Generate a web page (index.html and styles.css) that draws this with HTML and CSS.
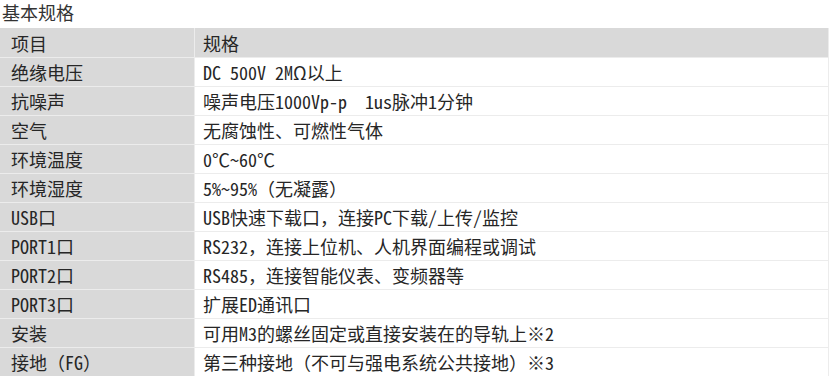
FILE: index.html
```html
<!DOCTYPE html>
<html lang="zh">
<head>
<meta charset="utf-8">
<link rel="stylesheet" href="styles.css">
</head>
<body>
<div class="title">基本规格</div>
<table class="spec">
  <thead>
    <tr><th class="c1">项目</th><th class="c2">规格</th></tr>
  </thead>
  <tbody>
    <tr><td class="c1">绝缘电压</td><td class="c2">DC 500V 2MΩ以上</td></tr>
    <tr><td class="c1">抗噪声</td><td class="c2">噪声电压1000Vp-p　1us脉冲1分钟</td></tr>
    <tr><td class="c1">空气</td><td class="c2">无腐蚀性、可燃性气体</td></tr>
    <tr><td class="c1">环境温度</td><td class="c2">0℃~60℃</td></tr>
    <tr><td class="c1">环境湿度</td><td class="c2">5%~95%（无凝露）</td></tr>
    <tr><td class="c1">USB口</td><td class="c2">USB快速下载口，连接PC下载/上传/监控</td></tr>
    <tr><td class="c1">PORT1口</td><td class="c2">RS232，连接上位机、人机界面编程或调试</td></tr>
    <tr><td class="c1">PORT2口</td><td class="c2">RS485，连接智能仪表、变频器等</td></tr>
    <tr><td class="c1">PORT3口</td><td class="c2">扩展ED通讯口</td></tr>
    <tr><td class="c1">安装</td><td class="c2">可用M3的螺丝固定或直接安装在的导轨上※2</td></tr>
    <tr><td class="c1">接地（FG）</td><td class="c2">第三种接地（不可与强电系统公共接地）※3</td></tr>
  </tbody>
</table>
</body>
</html>
```
FILE: styles.css
```css
html, body {
  margin: 0;
  padding: 0;
  background: #ffffff;
}
body {
  font-family: "Noto Sans Mono CJK SC", "Noto Sans CJK SC", sans-serif;
  font-size: 18px;
  color: #262626;
}
.title {
  height: 28px;
  line-height: 24px;
  padding-left: 2px;
  font-family: "Noto Sans CJK SC", sans-serif;
  font-size: 18px;
  color: #333333;
}
.spec {
  border-collapse: collapse;
  width: 829px;
  table-layout: fixed;
}
.spec th, .spec td {
  font-weight: normal;
  text-align: left;
  border: 1px solid #ececec;
  height: 28px;
  padding: 0;
  line-height: 28px;
  white-space: nowrap;
  overflow: hidden;
}
.spec thead th {
  background: #d9d9d9;
  height: 29px;
  border-top: none;
}
.spec .c1 {
  width: 183px;
  padding-left: 11px;
  background: #d9d9d9;
  border-left: none;
}
.spec .c2 {
  padding-left: 8px;
}
```
